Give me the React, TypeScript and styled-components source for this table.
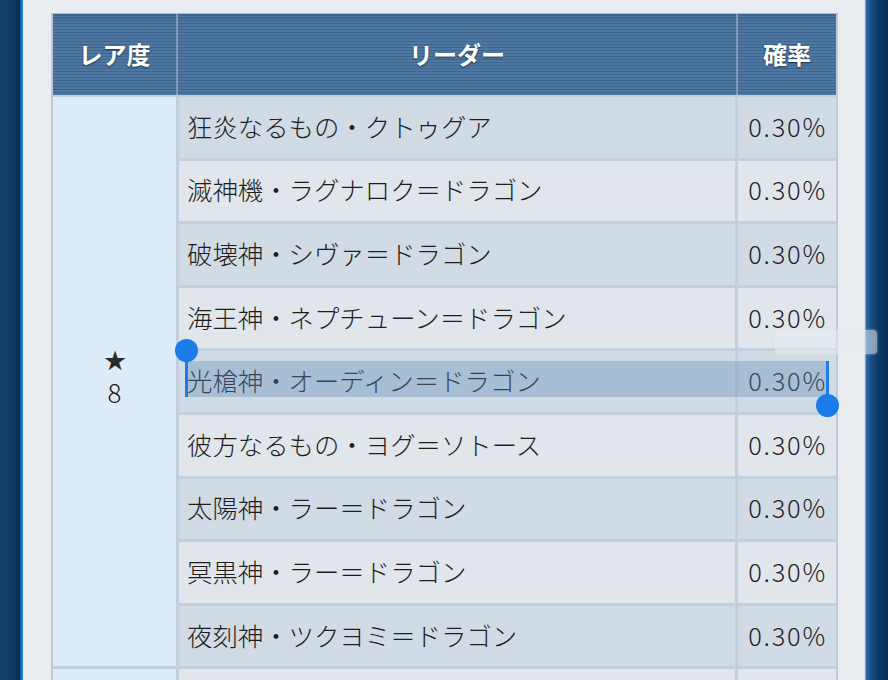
import React from 'react';
import styled, { createGlobalStyle } from 'styled-components';

const GlobalStyle = createGlobalStyle`
  html, body { margin:0; padding:0; }
  body {
    background:#e9edf2;
    font-family:"Noto Sans CJK JP","Noto Sans",sans-serif;
    overflow:hidden;
  }
`
const Page = styled.div`
  display:flex;
  height:680px;
  overflow:hidden;
  position:relative;
`
const LeftRail = styled.div`
  width:23px;
  flex:none;
  background:linear-gradient(to right,#133f66 0,#0f3a60 55%,#062d50 84%,#1463b0 90%,#2f8ce6 100%);
`
const RightRail = styled.div`
  width:24px;
  flex:none;
  background:linear-gradient(to right,#d6e0ea 0,#d6e0ea 4%,#2d6cab 8%,#1a5288 25%,#0c3a62 60%,#082c4e 100%);
`
const Panel = styled.div`
  flex:1;
  background:#e9edf2;
  padding:13px 0 0 28px;
`
const Table = styled.div`
  width:787px;
  border:2px solid #bccad8;
  border-top:1px solid #aebccb;
  background:#c2cfdc;
  box-sizing:border-box;
`
const HeadRow = styled.div`
  display:grid;
  grid-template-columns:123px 1fr 98px;
  column-gap:2px;
  background:#7e9bba;
  height:81px;
`
const HeadCell = styled.div`
  display:flex;
  align-items:center;
  justify-content:center;
  color:#fff;
  font-weight:700;
  font-size:24px;
  padding-bottom:2px;
  text-shadow:0 1px 2px rgba(0,0,0,.55);
  background:repeating-linear-gradient(to bottom,#3d6691 0,#3d6691 1.5px,#4e77a2 1.5px,#4e77a2 3px);
`
const Body = styled.div`
  display:grid;
  grid-template-columns:123px 1fr 98px;
  grid-auto-rows:60.6px;
  gap:3px;
  margin-top:2px;
  position:relative;
`
const RarityCell = styled.div`
  grid-row:span 9;
  background:#deebf8;
  display:flex;
  align-items:center;
  justify-content:center;
  padding-bottom:14px;
`
const RarityLabel = styled.div`
  text-align:center;
  font-size:26px;
  line-height:31px;
  font-weight:300;
  color:#222;
`
const Star = styled.span`
  font-size:27px;
  font-family:"DejaVu Sans",sans-serif;
  color:#2b2b2b;
`
const Cell = styled.div<{ $alt: boolean; $right?: boolean }>`
  background:${p => (p.$alt ? '#e1e6ec' : '#d0dbe5')};
  display:flex;
  align-items:center;
  justify-content:${p => (p.$right ? 'flex-end' : 'flex-start')};
  padding:${p => (p.$right ? '0 9px 3px 0' : '0 0 3px 8px')};
  font-size:25.4px;
  font-weight:300;
  color:#1e1e1e;
  white-space:nowrap;
  letter-spacing:${p => (p.$right ? '1.8px' : '0')};
`
const Selection = styled.div<{ $row: number }>`
  position:absolute;
  grid-row:${p => p.$row};
  grid-column:2 / 4;
  top:10px;
  left:7px;
  right:8px;
  height:36px;
  background:rgba(96,138,182,.36);
  pointer-events:none;
`
const Handle = styled.div<{ $end?: boolean }>`
  position:absolute;
  width:3px;
  background:#1b7be8;
  ${p => (p.$end
    ? 'right:-1px; top:0; height:36px;'
    : 'left:-1px; top:-11px; height:47px;')}
  &::after{
    content:'';
    position:absolute;
    width:23px;
    height:23px;
    border-radius:50%;
    background:#1b7be8;
    left:-10px;
    ${p => (p.$end ? 'bottom:-20px;' : 'top:-11px;')}
  }
`
const Ghost = styled.div`
  position:absolute;
  left:775px;
  top:330px;
  width:102px;
  height:24px;
  border-radius:4px;
  background:rgba(232,235,238,.55);
  box-shadow:0 0 3px rgba(232,235,238,.5);
`

const leaders = [
  '狂炎なるもの・クトゥグア',
  '滅神機・ラグナロク＝ドラゴン',
  '破壊神・シヴァ＝ドラゴン',
  '海王神・ネプチューン＝ドラゴン',
  '光槍神・オーディン＝ドラゴン',
  '彼方なるもの・ヨグ＝ソトース',
  '太陽神・ラー＝ドラゴン',
  '冥黒神・ラー＝ドラゴン',
  '夜刻神・ツクヨミ＝ドラゴン',
]

export default function App() {
  return (
    <Page>
      <GlobalStyle />
      <LeftRail />
      <Panel>
        <Table>
          <HeadRow>
            <HeadCell>レア度</HeadCell>
            <HeadCell>リーダー</HeadCell>
            <HeadCell>確率</HeadCell>
          </HeadRow>
          <Body>
            <RarityCell>
              <RarityLabel>
                <Star>★</Star>
                <br />
                8
              </RarityLabel>
            </RarityCell>
            {leaders.map((name, i) => (
              <React.Fragment key={name}>
                <Cell $alt={i % 2 === 1}>{name}</Cell>
                <Cell $alt={i % 2 === 1} $right>0.30%</Cell>
              </React.Fragment>
            ))}
            <RarityCell />
            <Cell $alt={true}></Cell>
            <Cell $alt={true} $right></Cell>
            <Selection $row={5}>
              <Handle />
              <Handle $end />
            </Selection>
          </Body>
        </Table>
      </Panel>
      <RightRail />
      <Ghost />
    </Page>
  );
}
